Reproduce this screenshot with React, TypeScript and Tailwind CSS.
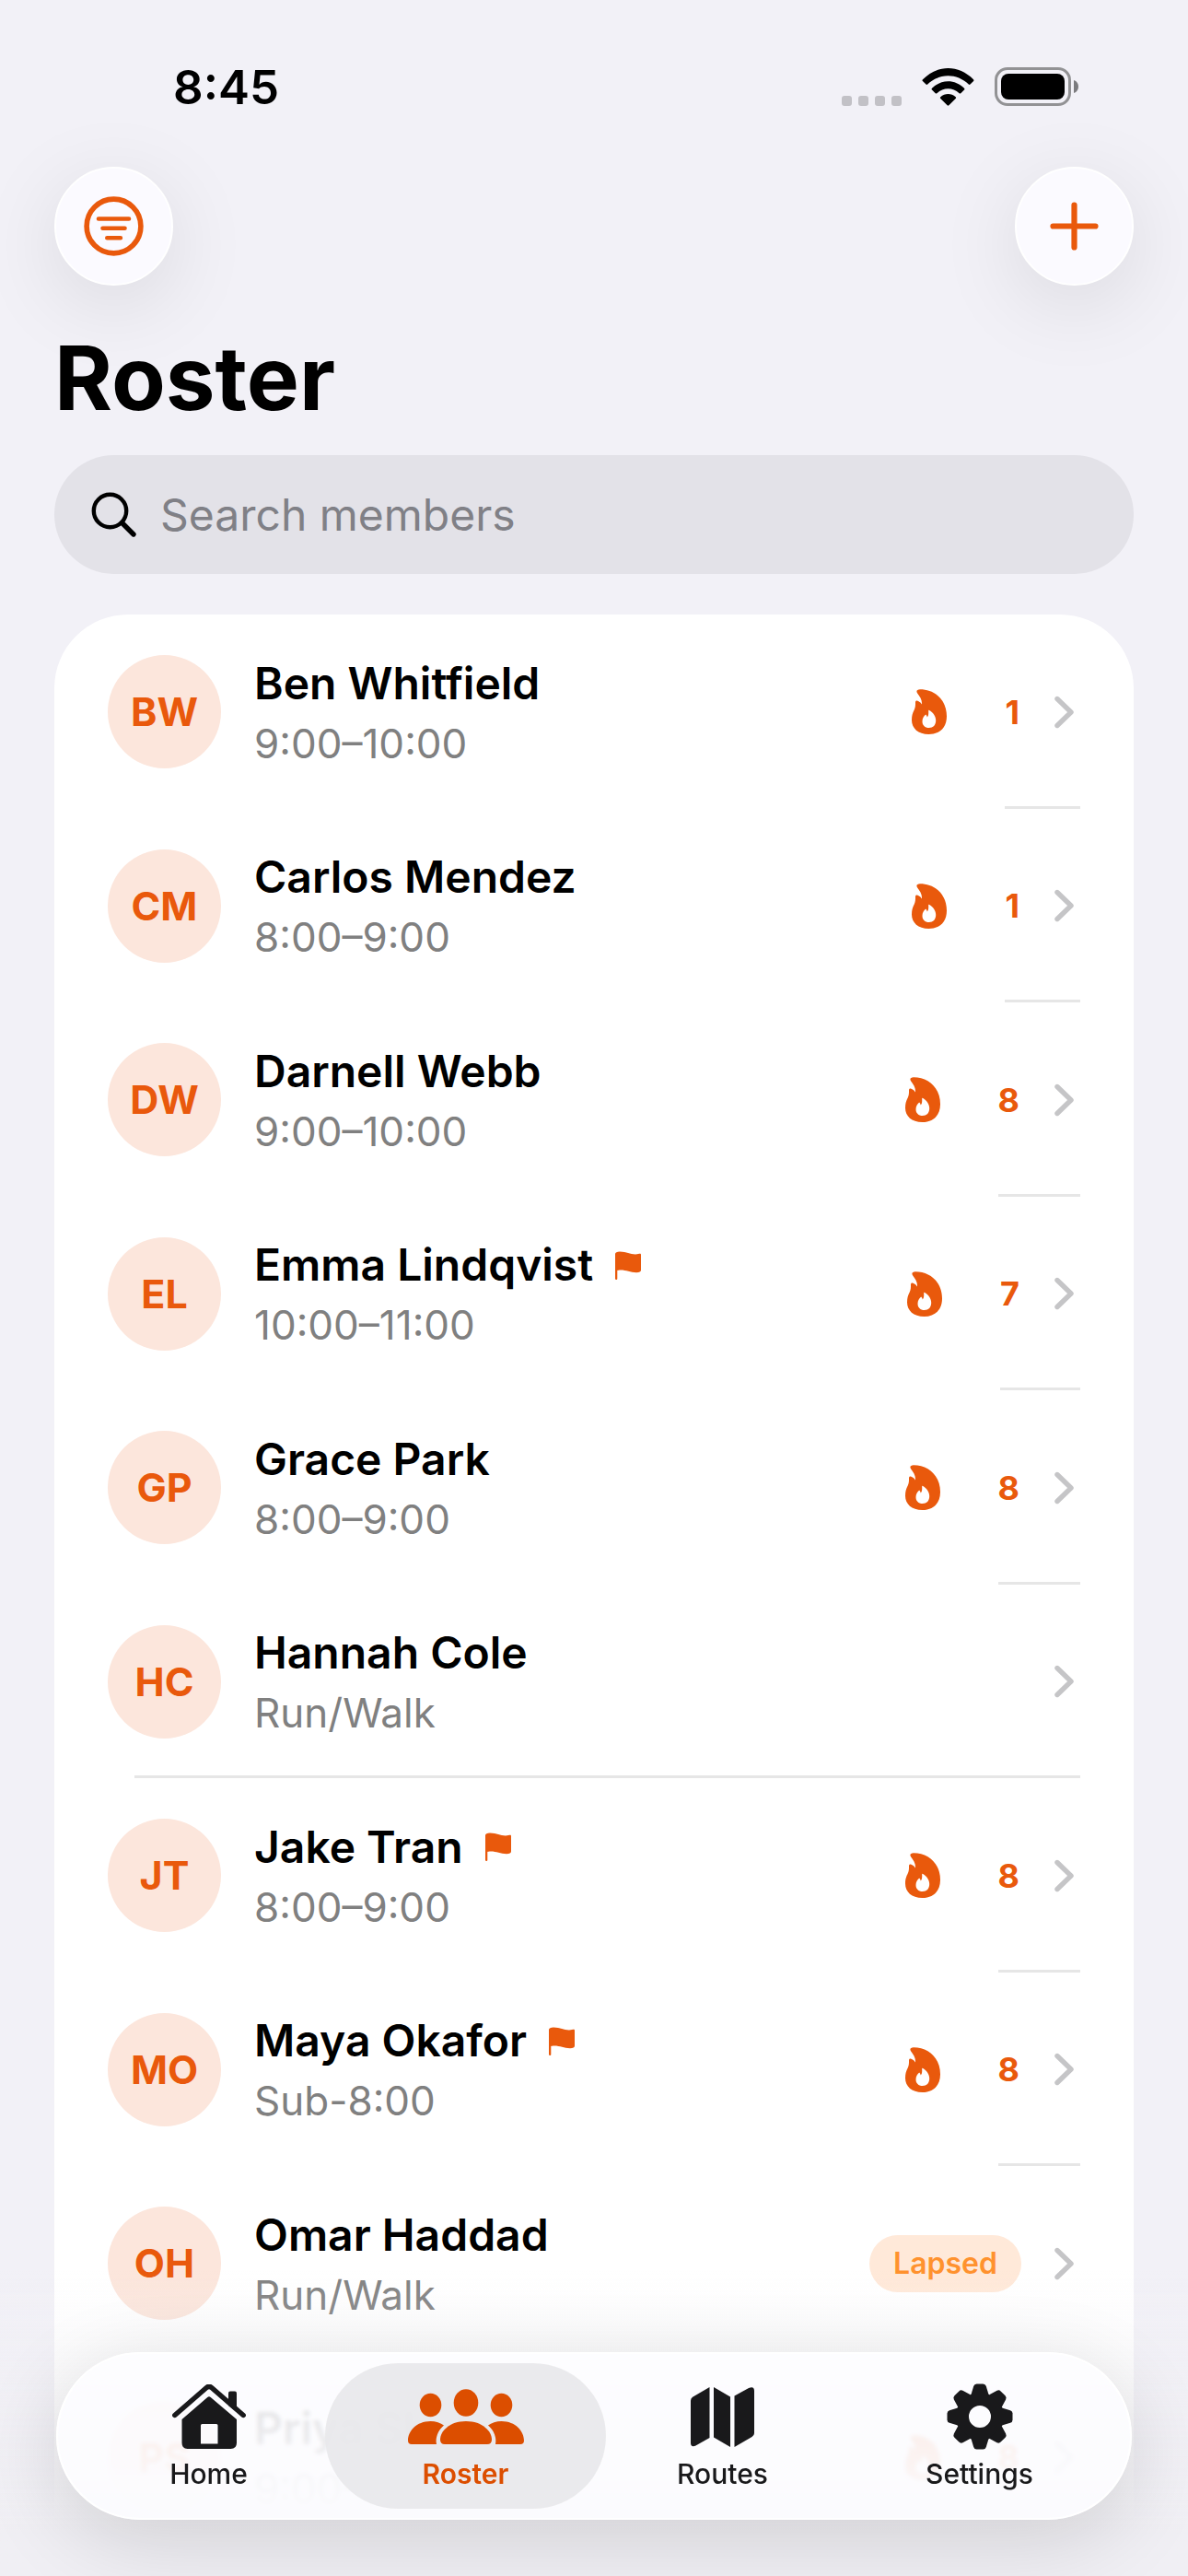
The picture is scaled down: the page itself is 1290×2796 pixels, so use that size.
import { clsx } from "clsx";

type Member = {
  initials: string;
  name: string;
  pace: string;
  streak?: number;
  flagged?: boolean;
  lapsed?: boolean;
};

const members: Member[] = [
  { initials: "BW", name: "Ben Whitfield", pace: "9:00–10:00", streak: 1 },
  { initials: "CM", name: "Carlos Mendez", pace: "8:00–9:00", streak: 1 },
  { initials: "DW", name: "Darnell Webb", pace: "9:00–10:00", streak: 8 },
  { initials: "EL", name: "Emma Lindqvist", pace: "10:00–11:00", streak: 7, flagged: true },
  { initials: "GP", name: "Grace Park", pace: "8:00–9:00", streak: 8 },
  { initials: "HC", name: "Hannah Cole", pace: "Run/Walk" },
  { initials: "JT", name: "Jake Tran", pace: "8:00–9:00", streak: 8, flagged: true },
  { initials: "MO", name: "Maya Okafor", pace: "Sub-8:00", streak: 8, flagged: true },
  { initials: "OH", name: "Omar Haddad", pace: "Run/Walk", lapsed: true },
  { initials: "PS", name: "Priya Shah", pace: "9:00–10:00", streak: 8 },
];

function WifiIcon() {
  return (
    <svg viewBox="0 0 57 41" className="h-[41px] w-[57px]" aria-hidden="true">
      <path d="M1 12.3C17-4 40-4 56 12.3q.8.8.1 1.700l-3.600 3.600q-.8.800-1.700 0C38 5.200 19 5.200 6.200 17.600q-.9.800-1.700 0L.9 14q-.9-.9.1-1.700Z" />
      <path d="M11 21.800C21 11.700 36 11.700 46 21.800q.9.900 0 1.700l-3.700 3.700q-.8.800-1.700 0c-7-6.500-17.200-6.500-24.200 0q-.9.800-1.700 0L11 23.500q-.9-.8 0-1.700Z" />
      <path d="M20.300 31.300c4.700-4.400 11.700-4.400 16.400 0 .6.500.6 1.100 0 1.700l-7.300 7.300q-.9.900-1.800 0L20.300 33c-.6-.6-.6-1.200 0-1.700Z" />
    </svg>
  );
}

function BatteryIcon() {
  return (
    <svg viewBox="0 0 92 42" className="h-[42px] w-[92px]" aria-hidden="true">
      <rect x="1.500" y="1.500" width="80" height="39" rx="12.500" fill="none" stroke="#929294" strokeWidth="3" />
      <rect x="7" y="7" width="69" height="28" rx="8" />
      <path d="M86 14c6.700 2 6.700 12 0 14Z" fill="#7b7b7e" />
    </svg>
  );
}

function FilterIcon() {
  return (
    <svg viewBox="0 0 65 65" className="size-[65px]" fill="none" stroke="currentColor" strokeLinecap="round" aria-hidden="true">
      <circle cx="32.500" cy="32.500" r="29.400" strokeWidth="5.600" />
      <path d="M16 24.500h33M20.500 34.800h24M25.300 45.200h14.600" strokeWidth="4.600" />
    </svg>
  );
}

function PlusIcon() {
  return (
    <svg viewBox="0 0 53 53" className="size-[53px]" fill="none" stroke="currentColor" strokeLinecap="round" strokeWidth="6.200" aria-hidden="true">
      <path d="M26.500 3.500v46M3.500 26.500h46" />
    </svg>
  );
}

function SearchIcon() {
  return (
    <svg viewBox="0 0 50 50" className="size-[50px] shrink-0" fill="none" stroke="black" strokeLinecap="round" aria-hidden="true">
      <circle cx="20.500" cy="20.500" r="17.700" strokeWidth="4.400" />
      <path d="M33.500 33.500 46 46" strokeWidth="5.400" />
    </svg>
  );
}

function FlameIcon() {
  return (
    <svg viewBox="0 0 38 49" className="h-[49px] w-[38px] shrink-0" fill="currentColor" fillRule="evenodd" aria-hidden="true">
      <path d="M9 .3C25 .3 38 11.500 38 29.500 38 41.500 30.500 49 18.500 49 7 49 0 42.500 0 33.500 0 24 4 23.500 4 16.500V14.500C4 12.500 5.500 12 7.500 13.200 9.300 14.200 10.300 15.200 11 16.500 11.500 11.500 8.500 7.500 6 4.200 4.500 2 6 .3 9 .3ZM18.700 22.800C23.500 25.500 26.200 29.500 26.200 34 26.200 39 23.200 42 18.800 42 14.300 42 11.500 39.300 11.500 35 11.500 32 13 29.300 15.200 27.600 16 28.200 16.500 29.200 16.800 30.500 18.600 28.600 18.200 25.600 18.200 23.300 18.200 22.800 18.400 22.600 18.700 22.800Z" />
    </svg>
  );
}

function FlagIcon() {
  return (
    <svg viewBox="0 0 28 31" className="h-[31px] w-[28px] shrink-0 text-[#e9590c]" fill="currentColor" role="img" aria-label="Flagged">
      <path d="M0 3C0 1.500 2 .5 5 .5 12.500.5 16 3.500 22 3.500 24.500 3.500 26 2.800 27 2.800 27.700 2.800 28 3.200 28 4V20.500C28 22.300 26.300 23.200 23 23.200 16.500 23.200 12 20.500 6 20.500 4 20.500 2.900 20.700 2.300 21V30Q2.300 31 1.200 31 0 31 0 30Z" />
    </svg>
  );
}

function ChevronIcon() {
  return (
    <svg viewBox="0 0 21 36" className="h-[36px] w-[21px] shrink-0" fill="none" stroke="#c5c5c7" strokeWidth="5.400" strokeLinecap="round" strokeLinejoin="round" aria-hidden="true">
      <path d="M3 3.500 18 18 3 32.500" />
    </svg>
  );
}

function HomeIcon() {
  return (
    <svg viewBox="0 0 80 70" className="h-[70px] w-[80px]" fill="currentColor" aria-hidden="true">
      <path d="M2.800 33.500 37 3.700Q40 1 43 3.700L77.200 33.500" fill="none" stroke="currentColor" strokeWidth="5.400" strokeLinecap="round" />
      <path d="M61 23V9.500Q61 7.500 63 7.500H68Q70 7.500 70 9.500V30Z" />
      <path fillRule="evenodd" d="M38.300 14q1.700-1.500 3.400 0L70 38v25.500Q70 70 63.500 70h-47Q10.500 70 10.500 63.500V38ZM32.500 43Q31 43 31 44.500V64.500H49.500V44.500Q49.500 43 48 43Z" />
    </svg>
  );
}

function PeopleIcon() {
  return (
    <svg viewBox="0 0 126 60" className="h-[60px] w-[126px]" fill="currentColor" aria-hidden="true">
      <ellipse cx="63" cy="15" rx="13.300" ry="14.800" />
      <ellipse cx="24.500" cy="17.500" rx="11.800" ry="12.700" />
      <ellipse cx="101.500" cy="17.500" rx="11.800" ry="12.700" />
      <path d="M40 60Q35 60 35 55C35 46 45 35 63 35S91 46 91 55Q91 60 86 60Z" />
      <path d="M4 60Q0 60 0 56C0 46 9 35 24.500 35 30 35 35.500 37 39 39.500 32.500 45 29.500 53 31 60Z" />
      <path d="M122 60Q126 60 126 56C126 46 117 35 101.500 35 96 35 90.500 37 87 39.500 93.500 45 96.500 53 95 60Z" />
    </svg>
  );
}

function MapIcon() {
  return (
    <svg viewBox="0 0 69 65" className="h-[65px] w-[69px]" fill="currentColor" aria-hidden="true">
      <path d="M0 14.500Q0 12 2.500 10.500L20.500 0V55L5 63.800Q0 65.500 0 60.500Z" />
      <path d="M25 0 43 10.500V65L25 54.500Z" />
      <path d="M47.500 9.500 63 1Q69-1.500 69 4V50Q69 52.500 66.500 54L47.500 65Z" />
    </svg>
  );
}

function GearIcon() {
  return (
    <svg viewBox="-36 -36 72 72" className="size-[72px]" fill="currentColor" aria-hidden="true">
      <defs>
        <path id="gear-tooth" d="M-9.500-24-6.800-33Q-6-35.500-3.500-35.500H3.500Q6-35.500 6.800-33L9.500-24Z" />
      </defs>
      <circle r="19" fill="none" stroke="currentColor" strokeWidth="14" />
      {[0, 45, 90, 135, 180, 225, 270, 315].map((angle) => (
        <use key={angle} href="#gear-tooth" transform={`rotate(${angle})`} />
      ))}
    </svg>
  );
}

const tabs = [
  { label: "Home", Icon: HomeIcon },
  { label: "Roster", Icon: PeopleIcon, active: true },
  { label: "Routes", Icon: MapIcon },
  { label: "Settings", Icon: GearIcon },
];

function StatusBar() {
  return (
    <div className="flex h-[181px] items-start justify-between pt-16 pr-[118px] pl-[188px]">
      <span className="text-[51px] leading-[62px] font-semibold">8:45</span>
      <div className="flex items-center gap-[22px] pt-[9px]">
        <div className="flex gap-[7px] self-end">
          {[0, 1, 2, 3].map((dot) => (
            <span key={dot} className="size-[11px] rounded-[3px] bg-[#c2c1c6]" />
          ))}
        </div>
        <WifiIcon />
        <BatteryIcon />
      </div>
    </div>
  );
}

function MemberRow({ member }: { member: Member }) {
  const { initials, name, pace, streak, flagged, lapsed } = member;
  const hasDivider = !streak && !lapsed;

  return (
    <li className="flex h-[211px] flex-col even:h-[210px]">
      <a href={`#${initials}`} className="flex min-h-0 flex-1 items-center px-[58px]">
        <span className="flex size-[123px] shrink-0 items-center justify-center rounded-full bg-[#fce6dc] text-[43px] font-bold text-[#e9590c]">
          {initials}
        </span>
        <div className="ml-9 flex-1 pt-[2px]">
          <div className="flex items-center gap-6">
            <span className="text-[48px] leading-[66px] font-semibold">{name}</span>
            {flagged && <FlagIcon />}
          </div>
          <p className="text-[44px] leading-[64px] text-[#808080]">{pace}</p>
        </div>
        {streak && (
          <span className="mr-[63px] text-[#e9590c]">
            <FlameIcon />
          </span>
        )}
        {lapsed && (
          <span className="rounded-full bg-[#ffe9d9] px-[26px] text-[32px] leading-[62px] font-semibold text-[#ff922e]">
            Lapsed
          </span>
        )}
        <div
          className={clsx(
            "flex items-center gap-[38px] self-stretch pr-[7px]",
            streak && "border-b-[3px] border-[#e6e6e6] pt-[3px]",
            lapsed && "pl-[36px]",
          )}
        >
          {streak && <span className="text-[36px] font-bold text-[#e9590c]">{streak}</span>}
          <ChevronIcon />
        </div>
      </a>
      {hasDivider && <div className="-mt-[3px] mr-[58px] ml-[87px] h-[3px] bg-[#e6e6e6]" />}
    </li>
  );
}

function TabBar() {
  return (
    <div className="fixed inset-x-0 bottom-0 bg-linear-to-b from-[#f0eff3]/0 via-[#f0eff3]/40 via-45% to-[#f0eff4] to-85% px-[61px] pt-[90px] pb-[61px]">
      <nav className="flex rounded-full border-2 border-white bg-[#fdfdff]/85 px-6 py-[10px] shadow-[0_20px_90px_rgba(0,0,0,0.14)] backdrop-blur-[2px]">
        {tabs.map(({ label, Icon, active }) => (
          <a
            key={label}
            href={`#${label.toLowerCase()}`}
            aria-current={active ? "page" : undefined}
            className={clsx(
              "-mx-[13px] flex h-[158px] flex-1 flex-col items-center rounded-full pt-[22px]",
              active ? "bg-[#e9e9eb]/90 text-[#dc4e00]" : "text-[#19191b]",
            )}
          >
            <span className="flex h-[72px] items-center">
              <Icon />
            </span>
            <span className={clsx("mt-2 text-[30px] leading-[36px]", active ? "font-semibold" : "font-medium")}>
              {label}
            </span>
          </a>
        ))}
      </nav>
    </div>
  );
}

export default function App() {
  return (
    <div className="flex min-h-screen flex-col bg-[#f2f1f7] font-['Inter',sans-serif] text-black">
      <StatusBar />
      <header className="px-[59px]">
        <div className="flex justify-between text-[#e9590c]">
          <button
            type="button"
            aria-label="Filter"
            className="flex size-[129px] items-center justify-center rounded-full border-2 border-white bg-[#fbfaff] shadow-[0_20px_90px_rgba(0,0,0,0.1)]"
          >
            <FilterIcon />
          </button>
          <button
            type="button"
            aria-label="Add member"
            className="flex size-[129px] items-center justify-center rounded-full border-2 border-white bg-[#fbfaff] shadow-[0_20px_90px_rgba(0,0,0,0.1)]"
          >
            <PlusIcon />
          </button>
        </div>
        <h1 className="mt-10 text-[96px] leading-[120px] font-bold">Roster</h1>
        <label className="mt-6 flex h-[129px] items-center gap-[25px] rounded-full bg-[#e3e2e8] px-10">
          <SearchIcon />
          <input
            type="search"
            aria-label="Search members"
            placeholder="Search members"
            className="min-w-0 flex-1 bg-transparent text-[48px] outline-none placeholder:text-[#808086]"
          />
        </label>
      </header>
      <main className="mx-[59px] mt-11 flex-1 rounded-t-[80px] bg-white">
        <ul>
          {members.map((member) => (
            <MemberRow key={member.initials} member={member} />
          ))}
        </ul>
      </main>
      <TabBar />
    </div>
  );
}
